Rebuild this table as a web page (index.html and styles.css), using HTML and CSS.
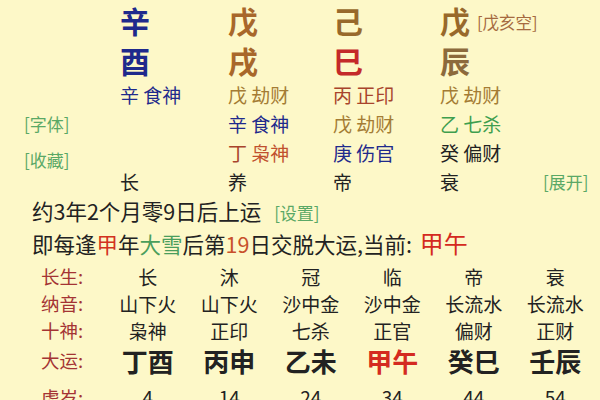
FILE: index.html
```html
<!DOCTYPE html>
<html lang="zh">
<head>
<meta charset="utf-8">
<link rel="stylesheet" href="styles.css">
</head>
<body>
<div class="page">
  <div class="pillars">
    <div class="side"></div>
    <div class="big c-blue">辛</div>
    <div class="big c-brown">戊</div>
    <div class="big c-brown2">己</div>
    <div class="big c-brown2">戊<span class="kong">[戊亥空]</span></div>
    <div class="side"></div>

    <div class="side"></div>
    <div class="big c-blue">酉</div>
    <div class="big c-brown">戌</div>
    <div class="big c-red">巳</div>
    <div class="big c-brown3">辰</div>
    <div class="side"></div>

    <div class="side"></div>
    <div class="sm c-blue">辛 食神</div>
    <div class="sm c-olive">戊 劫财</div>
    <div class="sm c-redbrown">丙 正印</div>
    <div class="sm c-olive">戊 劫财</div>
    <div class="side"></div>

    <div class="side link">[字体]</div>
    <div class="sm"></div>
    <div class="sm c-blue">辛 食神</div>
    <div class="sm c-olive">戊 劫财</div>
    <div class="sm c-green">乙 七杀</div>
    <div class="side"></div>

    <div class="side link low">[收藏]</div>
    <div class="sm"></div>
    <div class="sm"><span class="c-redbrown">丁</span> <span class="c-orange">枭神</span></div>
    <div class="sm c-blue">庚 伤官</div>
    <div class="sm c-black">癸 偏财</div>
    <div class="side"></div>

    <div class="side"></div>
    <div class="sm c-black">长</div>
    <div class="sm c-black">养</div>
    <div class="sm c-black">帝</div>
    <div class="sm c-black">衰</div>
    <div class="side link end">[展开]</div>
  </div>

  <div class="lines">
    <p class="line">约3年2个月零9日后上运 <span class="link set">[设置]</span></p>
    <p class="line">即每逢<span class="hl-red">甲</span>年<span class="hl-green">大雪</span>后第<span class="hl-org">19</span>日交脱大运,当前: <span class="cur">甲午</span></p>
  </div>

  <div class="table">
    <div class="lbl">长生:</div>
    <div class="val">长</div><div class="val">沐</div><div class="val">冠</div><div class="val">临</div><div class="val">帝</div><div class="val">衰</div>

    <div class="lbl">纳音:</div>
    <div class="val">山下火</div><div class="val">山下火</div><div class="val">沙中金</div><div class="val">沙中金</div><div class="val">长流水</div><div class="val">长流水</div>

    <div class="lbl">十神:</div>
    <div class="val">枭神</div><div class="val">正印</div><div class="val">七杀</div><div class="val">正官</div><div class="val">偏财</div><div class="val">正财</div>

    <div class="lbl r-yun">大运:</div>
    <div class="val yun">丁酉</div><div class="val yun">丙申</div><div class="val yun">乙未</div><div class="val yun now">甲午</div><div class="val yun">癸巳</div><div class="val yun">壬辰</div>

    <div class="lbl r-age">虚岁:</div>
    <div class="val age">4</div><div class="val age">14</div><div class="val age">24</div><div class="val age">34</div><div class="val age">44</div><div class="val age">54</div>
  </div>
</div>
</body>
</html>
```

FILE: styles.css
```css
html, body {
  margin: 0;
  padding: 0;
  background: #fdf8c8;
}
body {
  width: 600px;
  height: 400px;
  overflow: hidden;
  font-family: "Noto Sans CJK SC", "Noto Sans", sans-serif;
  color: #222;
}
.page {
  display: flex;
  flex-direction: column;
}
.pillars {
  display: grid;
  grid-template-columns: 120px 108px 105px 107px 107px 53px;
  grid-template-rows: 40px 40px 29px 29px 29px 29px;
}
.big {
  font-size: 30px;
  font-weight: 700;
  line-height: 40px;
  white-space: nowrap;
}
.sm {
  font-size: 19px;
  line-height: 29px;
  white-space: nowrap;
}
.side {
  font-size: 17px;
  line-height: 29px;
  white-space: nowrap;
}
.link { color: #5aa866; }
.pillars .link { padding-left: 24px; }
.pillars .end { padding-left: 0; margin-left: -4px; }
.low { padding-top: 7px; }
.kong {
  font-size: 16.5px;
  font-weight: 400;
  color: #a56a40;
  margin-left: 7px;
  vertical-align: 4px;
}
.c-blue { color: #1f2a8c; }
.c-brown { color: #a8672a; }
.c-brown2 { color: #98692b; }
.c-brown3 { color: #8c6a3c; }
.c-red { color: #c42a2a; }
.c-olive { color: #a47c34; }
.c-redbrown { color: #a8442c; }
.c-green { color: #3e9e4e; }
.c-orange { color: #c0502e; }
.c-black { color: #222; }

.lines {
  padding-left: 32px;
}
.line {
  margin: 0;
  font-size: 21.5px;
  line-height: 30px;
  white-space: nowrap;
}
.set {
  font-size: 17px;
  margin-left: 8px;
}
.hl-red { color: #d2321e; }
.hl-green { color: #4a9e5c; }
.hl-org { color: #c8502a; }
.cur {
  color: #d42a20;
  font-size: 24px;
  margin-left: 3px;
}

.table {
  display: grid;
  grid-template-columns: 107px repeat(6, 81.5px);
  grid-template-rows: 27px 27px 27px 33px 40px;
  padding-top: 4px;
}
.lbl {
  color: #a43434;
  font-size: 18.5px;
  padding-left: 41px;
  line-height: 27px;
  white-space: nowrap;
}
.val {
  text-align: center;
  font-size: 19px;
  line-height: 27px;
  white-space: nowrap;
}
.r-yun { line-height: 33px; }
.yun {
  font-size: 26px;
  font-weight: 700;
  line-height: 33px;
}
.now { color: #d42a20; }
.r-age, .age { line-height: 40px; }
```
